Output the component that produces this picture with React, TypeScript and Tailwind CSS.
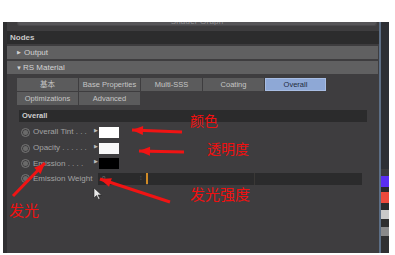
import React from 'react';

type Arrow = { x1: number; y1: number; x2: number; y2: number };

const arrows: Arrow[] = [
  { x1: 182, y1: 132, x2: 132, y2: 130 },
  { x1: 184, y1: 152, x2: 139, y2: 151 },
  { x1: 13, y1: 196, x2: 45, y2: 163 },
  { x1: 170, y1: 202, x2: 100, y2: 179 },
];

// arrowhead points computed from the line direction
const head = (a: Arrow) => {
  const dx = a.x2 - a.x1;
  const dy = a.y2 - a.y1;
  const len = Math.hypot(dx, dy);
  const ux = dx / len;
  const uy = dy / len;
  const bx = a.x2 - ux * 11;
  const by = a.y2 - uy * 11;
  const px = -uy * 4.5;
  const py = ux * 4.5;
  return `${a.x2},${a.y2} ${bx + px},${by + py} ${bx - px},${by - py}`;
};

const tabsTop = ['基本', 'Base Properties', 'Multi-SSS', 'Coating', 'Overall'];
const tabsBottom = ['Optimizations', 'Advanced'];

const Radio = () => (
  <div className="w-[9px] h-[9px] rounded-full border border-[#777] flex items-center justify-center">
    <div className="w-[5px] h-[5px] rounded-full bg-[#6a6a6a]" />
  </div>
);

const ParamRow = ({ label, height, swatch }: { label: string; height: string; swatch?: string }) => (
  <div className={`flex items-center ${height}`}>
    <div className="w-[14px] flex justify-end pr-[3px]">
      <Radio />
    </div>
    <span className="w-[61px] text-[8px] text-[#a3a3a3] whitespace-nowrap">{label}</span>
    <span className="w-[5px] text-[5px] text-[#bbb] leading-none -mt-[4px]">▶</span>
    {swatch && <div className={`w-[20px] h-[11px] ${swatch}`} />}
  </div>
);

export default function App() {
  return (
    <div className="relative w-[395px] h-[255px] bg-white overflow-hidden font-['Liberation_Sans',sans-serif]">
      <div className="h-[22px]" />
      <div className="flex h-[231px]">
        <div className="w-[3px]" />
        <div className="w-[376px] bg-[#3e3d3f] border-l-4 border-[#2f2f31] flex flex-col overflow-hidden">
          {/* graph header box, mostly cut off */}
          <div className="h-[9px]">
            <div className="ml-[10px] w-[360px] h-[4px] bg-[#565558] rounded-b-[3px] border-x border-b border-[#4a494c] overflow-hidden flex justify-center">
              <span className="text-[8px] text-[#8d8d90] leading-none -mt-[4px] tracking-wide">Shader Graph</span>
            </div>
          </div>
          <div className="h-[13px] bg-[#2c2c2d] -ml-[4px] flex items-center pl-[7px]">
            <span className="text-[8px] font-bold text-[#c8c8c8]">Nodes</span>
          </div>
          <div className="mt-[2px] mr-[1px] h-[13px] bg-[#606061] flex items-center pl-[10px] gap-[3px] text-[8px] text-[#d2d2d2]">
            <span className="text-[5px] leading-none">▶</span>
            <span>Output</span>
          </div>
          <div className="mt-[2px] mr-[1px] h-[13px] bg-[#606061] flex items-center pl-[9px] gap-[1px] text-[8px] text-[#d2d2d2]">
            <span className="text-[6px] leading-none">▼</span>
            <span>RS Material</span>
          </div>
          <div className="mt-[4px] pl-[10px] flex gap-[1px]">
            {tabsTop.map((t) => (
              <div
                key={t}
                className={`w-[61px] h-[13px] flex items-center justify-center text-[7.5px] font-['Liberation_Sans','Noto_Sans_CJK_SC',sans-serif] ${
                  t === 'Overall' ? 'bg-[#8ea8d6] text-[#1e2a40] border border-[#a8bde3]' : 'bg-[#5b5b5c] text-[#c6c6c6]'
                }`}
              >
                {t}
              </div>
            ))}
          </div>
          <div className="mt-[1px] pl-[10px] flex gap-[1px]">
            {tabsBottom.map((t) => (
              <div key={t} className="w-[61px] h-[13px] bg-[#5b5b5c] text-[#c6c6c6] flex items-center justify-center text-[7.5px]">
                {t}
              </div>
            ))}
          </div>
          <div className="mt-[5px] ml-[12px] w-[348px] h-[12px] bg-[#2b2b2c] flex items-center pl-[3px]">
            <span className="text-[7.5px] font-bold text-[#cfcfcf]">Overall</span>
          </div>
          <div className="ml-[12px] mt-[2px] flex flex-col">
            <ParamRow label="Overall Tint . . ." height="h-[16px]" swatch="bg-white" />
            <ParamRow label="Opacity . . . . . ." height="h-[16px]" swatch="bg-[#f8f8f8]" />
            <ParamRow label="Emission . . . ." height="h-[15px]" swatch="bg-black" />
            <div className="flex items-center h-[15px]">
              <div className="w-[14px] flex justify-end pr-[3px]">
                <Radio />
              </div>
              <span className="w-[65px] text-[8px] text-[#a3a3a3] whitespace-nowrap">Emission Weight</span>
              <div className="w-[48px] h-[12px] bg-[#2a2a2b] flex items-center justify-between px-[4px] text-[6px] text-[#777]">
                <span>0</span>
                <span>⁝</span>
              </div>
              <div className="w-[2px] h-[11px] bg-[#d08a26]" />
              <div className="w-[214px] h-[12px] bg-[#2b2b2c] flex">
                <div className="w-[107px] border-r border-[#3a3836]" />
              </div>
            </div>
          </div>
        </div>
        <div className="w-[2px] bg-[#5d6f86]" />
        <div className="w-[8px] bg-[#2c2f34] flex flex-col">
          <div className="h-[147px]" />
          <div className="h-[7px] bg-[#3a3a3c]" />
          <div className="h-[11px] bg-[#5a2ef2]" />
          <div className="h-[5px] bg-[#2a2a2b]" />
          <div className="h-[11px] bg-[#ee4a3c]" />
          <div className="h-[7px] bg-[#2a2a2b]" />
          <div className="h-[9px] bg-[#c9c9c9]" />
          <div className="h-[8px] bg-[#2e2e2f]" />
          <div className="h-[9px] bg-[#8a8a8b]" />
          <div className="flex-1 bg-[#303032]" />
        </div>
      </div>

      {/* red annotations */}
      <svg className="absolute left-0 top-0" width="395" height="255">
        {arrows.map((a, i) => (
          <g key={i}>
            <line x1={a.x1} y1={a.y1} x2={a.x2} y2={a.y2} stroke="#f01414" strokeWidth="3" />
            <polygon points={head(a)} fill="#f01414" />
          </g>
        ))}
        <path d="M94 188 L94 198 L96.5 195.5 L98.5 199.5 L100 198.8 L98 195 L101.5 195 Z" fill="#e8e8e8" stroke="#222" strokeWidth="0.6" />
      </svg>
      <span className="absolute left-[190px] top-[113px] text-[14px] leading-none text-[#f01010] font-['Noto_Sans_CJK_SC',sans-serif]">颜色</span>
      <span className="absolute left-[207px] top-[141px] text-[14px] leading-none text-[#f01010] font-['Noto_Sans_CJK_SC',sans-serif]">透明度</span>
      <span className="absolute left-[9px] top-[202px] text-[15px] leading-none text-[#f01010] font-['Noto_Sans_CJK_SC',sans-serif]">发光</span>
      <span className="absolute left-[190px] top-[186px] text-[15px] leading-none text-[#f01010] font-['Noto_Sans_CJK_SC',sans-serif]">发光强度</span>
    </div>
  );
}
